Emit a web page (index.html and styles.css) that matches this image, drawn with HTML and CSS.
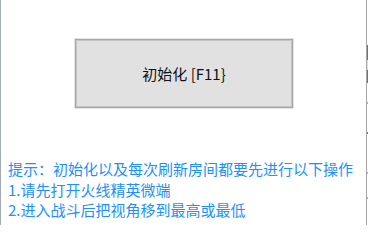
FILE: index.html
```html
<!DOCTYPE html>
<html lang="zh-CN">
<head>
<meta charset="utf-8">
<title>初始化</title>
<link rel="stylesheet" href="styles.css">
</head>
<body>
<div class="window">
  <div class="client">
    <button class="init-btn" type="button">初始化 [F11}</button>
    <div class="hints">
      <p>提示：初始化以及每次刷新房间都要先进行以下操作</p>
      <p>1.请先打开火线精英微端</p>
      <p>2.进入战斗后把视角移到最高或最低</p>
    </div>
  </div>
  <div class="behind">
    <span class="seg seg-a"></span>
    <span class="seg seg-gap"></span>
    <span class="seg seg-b"></span>
    <span class="seg dot dot-1"></span>
    <span class="seg dot dot-2"></span>
    <span class="seg dot dot-3"></span>
    <span class="seg dot dot-4"></span>
  </div>
</div>
</body>
</html>
```
FILE: styles.css
```css
html, body {
  margin: 0;
  padding: 0;
  background: #ffffff;
}

.window {
  display: flex;
  width: 368px;
  height: 225px;
  overflow: hidden;
}

.client {
  width: 365px;
  height: 225px;
  border-left: 1px solid #a3aab8;
  border-right: 1px solid #a6a6a6;
  background: #ffffff;
  font-family: "Noto Sans CJK SC", "Noto Sans", sans-serif;
}

.init-btn {
  display: block;
  box-sizing: border-box;
  margin: 39px 0 0 74px;
  width: 218px;
  height: 69px;
  padding: 0;
  border: 1px solid #a8a8a8;
  box-shadow: inset 0 0 0 1px #c4c4c4, 0 0 0 1px #e4e4e4;
  background: #e1e1e1;
  color: #111111;
  font-family: "Noto Sans CJK SC", "Noto Sans", sans-serif;
  font-size: 15px;
  line-height: 20px;
}

.hints {
  margin: 51px 0 0 7px;
}

.hints p {
  margin: 0;
  color: #1e8fff;
  font-size: 15px;
  line-height: 20.5px;
  white-space: nowrap;
}

.behind {
  display: flex;
  flex-direction: column;
  width: 1px;
  padding-top: 45px;
}

.seg {
  display: block;
  width: 1px;
}

.seg-a {
  height: 15px;
  background: #1a8ad8;
}

.seg-gap {
  height: 10px;
  background: #cfe3f3;
}

.seg-b {
  height: 13px;
  background: #1a8ad8;
}

.dot {
  height: 2px;
  background: #8cc0e8;
}

.dot-1 { margin-top: 19px; }
.dot-2 { margin-top: 28px; background: #2a90dc; }
.dot-3 { margin-top: 38px; }
.dot-4 { margin-top: 23px; }
```
